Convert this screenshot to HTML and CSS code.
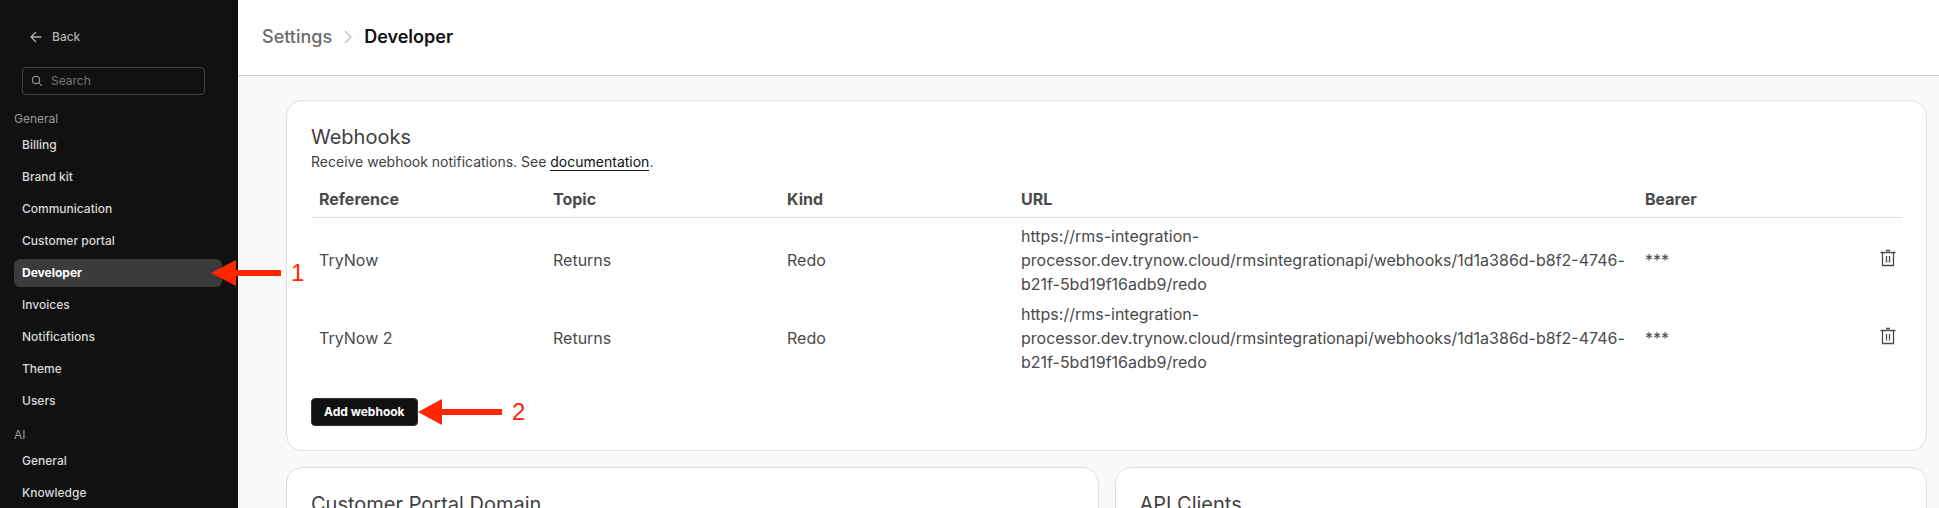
FILE: index.html
```
<!DOCTYPE html>
<html lang="en">

  <head>
    <meta charset="UTF-8">
    <meta name="viewport" content="width=device-width, initial-scale=1.0">
    <title>Settings - Developer</title>
    <link rel="stylesheet" href="styles.css">
  </head>

  <body>
    <aside class="sidebar">
      <a href="#" class="back">
        <svg width="12" height="12" viewBox="0 0 12 12"><path d="M6 1 1 6l5 5M1 6h10.500" /></svg>
        Back
      </a>

      <label class="search">
        <svg width="12" height="12" viewBox="0 0 12 12"><circle cx="5" cy="5" r="3.800" /><path d="m7.800 7.800 3.200 3.200" /></svg>
        <input type="text" placeholder="Search" aria-label="Search">
      </label>

      <nav class="menu">
        <h2 class="menu-title">General</h2>
        <a href="#" class="menu-item">Billing</a>
        <a href="#" class="menu-item">Brand kit</a>
        <a href="#" class="menu-item">Communication</a>
        <a href="#" class="menu-item">Customer portal</a>
        <a href="#" class="menu-item active">Developer</a>
        <a href="#" class="menu-item">Invoices</a>
        <a href="#" class="menu-item">Notifications</a>
        <a href="#" class="menu-item">Theme</a>
        <a href="#" class="menu-item">Users</a>
      </nav>

      <nav class="menu">
        <h2 class="menu-title">AI</h2>
        <a href="#" class="menu-item">General</a>
        <a href="#" class="menu-item">Knowledge</a>
      </nav>
    </aside>

    <div class="page">
      <header class="header">
        <a href="#" class="crumb">Settings</a>
        <svg class="crumb-arrow" width="8" height="14" viewBox="0 0 8 14"><path d="m1 1 6 6-6 6" /></svg>
        <h1 class="crumb current">Developer</h1>
      </header>

      <main class="content">
        <section class="card wide">
          <h2 class="card-title">Webhooks</h2>
          <p class="card-desc">Receive webhook notifications. See <a href="#">documentation</a>.</p>

          <table class="table">
            <thead>
              <tr>
                <th class="col">Reference</th>
                <th class="col">Topic</th>
                <th class="col">Kind</th>
                <th class="col-url">URL</th>
                <th>Bearer</th>
                <th class="col-action"></th>
              </tr>
            </thead>
            <tbody>
              <tr>
                <td>TryNow</td>
                <td>Returns</td>
                <td>Redo</td>
                <td>https://rms-integration-processor.dev.trynow.cloud/rmsintegrationapi/webhooks/1d1a386d-b8f2-4746-b21f-5bd19f16adb9/redo</td>
                <td>***</td>
                <td>
                  <button class="delete" aria-label="Delete TryNow">
                    <svg width="16" height="18" viewBox="0 0 16 18"><path d="M.500 3.500h15M6 1.500h4M2.500 4v12.500h11V4M6.500 7v6.500M9.500 7v6.500" /></svg>
                  </button>
                </td>
              </tr>
              <tr>
                <td>TryNow 2</td>
                <td>Returns</td>
                <td>Redo</td>
                <td>https://rms-integration-processor.dev.trynow.cloud/rmsintegrationapi/webhooks/1d1a386d-b8f2-4746-b21f-5bd19f16adb9/redo</td>
                <td>***</td>
                <td>
                  <button class="delete" aria-label="Delete TryNow 2">
                    <svg width="16" height="18" viewBox="0 0 16 18"><path d="M.500 3.500h15M6 1.500h4M2.500 4v12.500h11V4M6.500 7v6.500M9.500 7v6.500" /></svg>
                  </button>
                </td>
              </tr>
            </tbody>
          </table>

          <button class="btn">Add webhook</button>
        </section>

        <section class="card">
          <h2 class="card-title">Customer Portal Domain</h2>
        </section>

        <section class="card">
          <h2 class="card-title">API Clients</h2>
        </section>
      </main>
    </div>

    <!-- numbered steps -->
    <div class="step step-menu">
      <svg width="70" height="26" viewBox="0 0 70 26"><path d="M0 13 25 0v10h45v6H25v10z" /></svg>
      <span>1</span>
    </div>
    <div class="step step-add">
      <svg width="84" height="26" viewBox="0 0 84 26"><path d="M0 13 24 0v10h60v6H24v10z" /></svg>
      <span>2</span>
    </div>
  </body>

</html>
```
FILE: styles.css
```
* {
  box-sizing: border-box;
}

html,
body {
  height: 100%;
  margin: 0;
  overflow: hidden;
}

body {
  display: flex;
  position: relative;
  background: #f9f9f9;
  color: #3f3f3f;
  font-family: Inter, "Liberation Sans", sans-serif;
  font-size: 16px;
  line-height: 24px;
}

h1,
h2,
p {
  margin: 0;
}

a {
  color: inherit;
  text-decoration: none;
}

button,
input {
  font: inherit;
}

svg {
  display: block;
  flex: none;
  fill: none;
  stroke: currentColor;
}

/* sidebar */
.sidebar {
  flex: none;
  width: 238px;
  padding: 24px 16px 0 14px;
  background: #111;
  color: #d9d9d9;
  font-size: 12px;
  font-weight: 500;
  overflow: hidden;
}

.back {
  display: flex;
  align-items: center;
  gap: 10px;
  height: 26px;
  padding-left: 16px;
  color: #b0b0b0;
}

.search {
  display: flex;
  align-items: center;
  gap: 8px;
  height: 28px;
  margin: 17px 17px 12px 8px;
  padding: 0 8px;
  border: 1px solid #444;
  border-radius: 4px;
  color: #b0b0b0;
}

.search input {
  width: 100%;
  min-width: 0;
  padding: 0;
  border: none;
  outline: none;
  background: none;
  color: #fff;
  font-weight: 400;
}

.search input::placeholder {
  color: #757575;
}

.back svg,
.delete svg {
  stroke-width: 1.3;
}

.menu {
  display: flex;
  flex-direction: column;
  gap: 4px;
  margin-bottom: 8px;
}

.menu-title {
  margin-bottom: -4px;
  color: #999;
  font-size: 12px;
  font-weight: 400;
  line-height: 24px;
}

.menu-item {
  padding: 0 8px;
  border-radius: 6px;
  line-height: 28px;
}

.menu-item.active {
  background: #3b3b3b;
  color: #fff;
  font-weight: 700;
}

/* header */
.page {
  flex: 1;
  min-width: 0;
}

.header {
  display: flex;
  align-items: center;
  gap: 12px;
  height: 76px;
  padding: 0 24px 2px;
  border-bottom: 1px solid #ccc;
  background: #fff;
}

.crumb {
  color: #6b6b6b;
  font-size: 18px;
  font-weight: 500;
}

.crumb.current {
  color: #111;
  font-weight: 600;
}

.crumb-arrow {
  color: #bbb;
  stroke-width: 1.3;
}

/* cards */
.content {
  display: grid;
  grid-template-columns: 1fr 1fr;
  gap: 16px;
  padding: 24px 12px 24px 48px;
}

.card {
  min-height: 120px;
  padding: 24px;
  border: 1px solid #dfdfdf;
  border-radius: 16px;
  background: #fff;
}

.wide {
  grid-column: 1 / 3;
}

.card-title {
  font-size: 20px;
  font-weight: 400;
}

.card-desc {
  font-size: 14px;
  line-height: 26px;
}

.card-desc a {
  border-bottom: 1px solid #111;
  color: #111;
}

/* table */
.table {
  width: 100%;
  table-layout: fixed;
  border-collapse: collapse;
  color: #4a4a4a;
  text-align: left;
}

.table th {
  height: 42px;
  padding: 6px 8px;
  border-bottom: 1px solid #dfdfdf;
  font-weight: 700;
  vertical-align: bottom;
}

.table td {
  padding: 6px 8px 0;
  overflow-wrap: break-word;
}

.col {
  width: 234px;
}

.col-url {
  width: 624px;
}

.col-action {
  width: 40px;
}

.delete {
  display: block;
  margin-left: auto;
  padding: 0 0 4px;
  border: none;
  background: none;
  color: inherit;
  cursor: pointer;
}

.table td:last-child {
  padding-right: 6px;
}

.btn {
  display: block;
  height: 28px;
  margin-top: 24px;
  padding: 0 12px;
  border: 1px solid #333;
  border-radius: 4px;
  background: #111;
  color: #fff;
  font-size: 12px;
  font-weight: 700;
  cursor: pointer;
}

/* numbered steps */
.step {
  display: flex;
  align-items: center;
  gap: 10px;
  position: absolute;
  color: #ff2600;
  font-family: "Liberation Sans", sans-serif;
  font-size: 24px;
  pointer-events: none;
}

.step svg {
  fill: currentColor;
  stroke: none;
}

.step-menu {
  left: 211px;
  top: 260px;
}

.step-add {
  left: 418px;
  top: 399px;
}
```
